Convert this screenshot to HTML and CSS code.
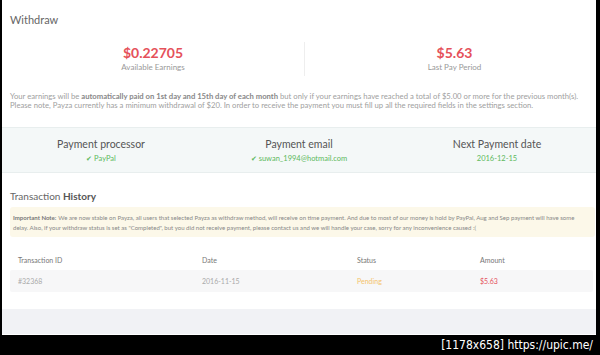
FILE: index.html
```html
<!DOCTYPE html>
<html>
<head>
<meta charset="utf-8">
<link rel="stylesheet" href="styles.css">
</head>
<body>
<div class="frame">
  <div class="page">
    <h2 class="title">Withdraw</h2>
    <div class="stats">
      <div class="stat stat-left">
        <div class="amount">$0.22705</div>
        <div class="label">Available Earnings</div>
      </div>
      <div class="stat stat-right">
        <div class="amount">$5.63</div>
        <div class="label">Last Pay Period</div>
      </div>
    </div>
    <p class="info">Your earnings will be <b>automatically paid on 1st day and 15th day of each month</b> but only if your earnings have reached a total of $5.00 or more for the previous month(s).<br>Please note, Payza currently has a minimum withdrawal of $20. In order to receive the payment you must fill up all the required fields in the settings section.</p>
    <div class="payment">
      <div class="pcol">
        <div class="phead">Payment processor</div>
        <div class="pval"><span class="check">✔</span> PayPal</div>
      </div>
      <div class="pcol">
        <div class="phead">Payment email</div>
        <div class="pval"><span class="check">✔</span> suwan_1994@hotmail.com</div>
      </div>
      <div class="pcol">
        <div class="phead">Next Payment date</div>
        <div class="pval">2016-12-15</div>
      </div>
    </div>
    <h3 class="subtitle">Transaction <b>History</b></h3>
    <div class="note"><b class="note-lead">Important Note:</b> We are now stable on Payza, all users that selected Payza as withdraw method, will receive on time payment. And due to most of our money is hold by PayPal, Aug and Sep payment will have some<br>delay. Also, if your withdraw status is set as "Completed", but you did not receive payment, please contact us and we will handle your case, sorry for any inconvenience caused :(</div>
    <div class="table">
      <div class="trow thead">
        <div class="c1">Transaction ID</div>
        <div class="c2">Date</div>
        <div class="c3">Status</div>
        <div class="c4">Amount</div>
      </div>
      <div class="trow tbody">
        <div class="c1">#32368</div>
        <div class="c2">2016-11-15</div>
        <div class="c3 pending">Pending</div>
        <div class="c4 red">$5.63</div>
      </div>
    </div>
    <div class="footer"></div>
  </div>
  <div class="caption">[1178x658] https://upic.me/</div>
</div>
</body>
</html>
```

FILE: styles.css
```css
html, body {
  margin: 0;
  padding: 0;
  background: #000;
}
body {
  width: 600px;
  height: 355px;
  overflow: hidden;
  font-family: "Lato", "Open Sans", sans-serif;
}
.frame {
  padding-left: 2px;
}
.page {
  width: 594px;
  height: 335px;
  background: #fff;
  display: flex;
  flex-direction: column;
  overflow: hidden;
}
.title {
  margin: 12px 0 0 8px;
  font-size: 11px;
  font-weight: 400;
  color: #666;
  line-height: 15px;
}
.stats {
  display: flex;
  margin-top: 15px;
}
.stat {
  text-align: center;
  padding: 2px 0 3px;
}
.stat-left {
  width: 302px;
}
.stat-right {
  flex: 1;
  border-left: 1px solid #eee;
  padding-left: 8px;
}
.amount {
  color: #e5515a;
  font-size: 14px;
  font-weight: 700;
  line-height: 18px;
}
.label {
  color: #999;
  font-size: 8px;
  line-height: 11px;
  margin-top: 0;
}
.info {
  margin: 16px 0 0 8px;
  font-size: 7.7px;
  line-height: 8.5px;
  color: #a0a0a0;
}
.info b {
  color: #888;
  font-weight: 700;
}
.payment {
  margin-top: 18px;
  display: flex;
  background: #f4f8f8;
  border-top: 1px solid #e8eeee;
  border-bottom: 1px solid #e8eeee;
  padding: 9px 0 8px;
}
.pcol {
  flex: 1;
  text-align: center;
}
.phead {
  font-size: 10.5px;
  color: #555;
  line-height: 14px;
}
.pval {
  font-size: 7.5px;
  color: #5cb85c;
  line-height: 11px;
  margin-top: 2px;
}
.check {
  font-size: 7px;
}
.subtitle {
  margin: 16px 0 0 8px;
  font-size: 10px;
  font-weight: 400;
  color: #666;
  line-height: 14px;
}
.subtitle b {
  font-weight: 700;
  color: #555;
}
.note {
  margin: 4px 0 0 8px;
  width: 585px;
  background: #fcf8e9;
  border-radius: 3px;
  padding: 6px 2px 5px 3px;
  box-sizing: border-box;
  font-size: 6.05px;
  line-height: 9.5px;
  color: #888;
}
.note-lead {
  color: #777;
  font-weight: 700;
  margin-right: 0.5px;
}
.table {
  margin: 13px 0 0 8px;
  width: 583px;
}
.trow {
  display: flex;
  align-items: center;
  font-size: 7px;
  color: #777;
}
.thead {
  height: 20px;
}
.tbody {
  height: 22px;
  background: #f7f7f8;
  color: #aaa;
  border-radius: 2px;
}
.c1 {
  width: 184px;
  padding-left: 8px;
}
.c2 {
  width: 155px;
}
.c3 {
  width: 123px;
}
.c4 {
  flex: 1;
}
.pending {
  color: #f5c36b;
}
.red {
  color: #e5515a;
}
.footer {
  margin-top: 17px;
  flex: 1;
  background: #f1f2f5;
  border-bottom: 1px solid #fff;
}
.caption {
  width: 591px;
  text-align: right;
  color: #fff;
  font-family: "DejaVu Sans Condensed", "DejaVu Sans", sans-serif;
  font-size: 12px;
  line-height: 20px;
}
```
